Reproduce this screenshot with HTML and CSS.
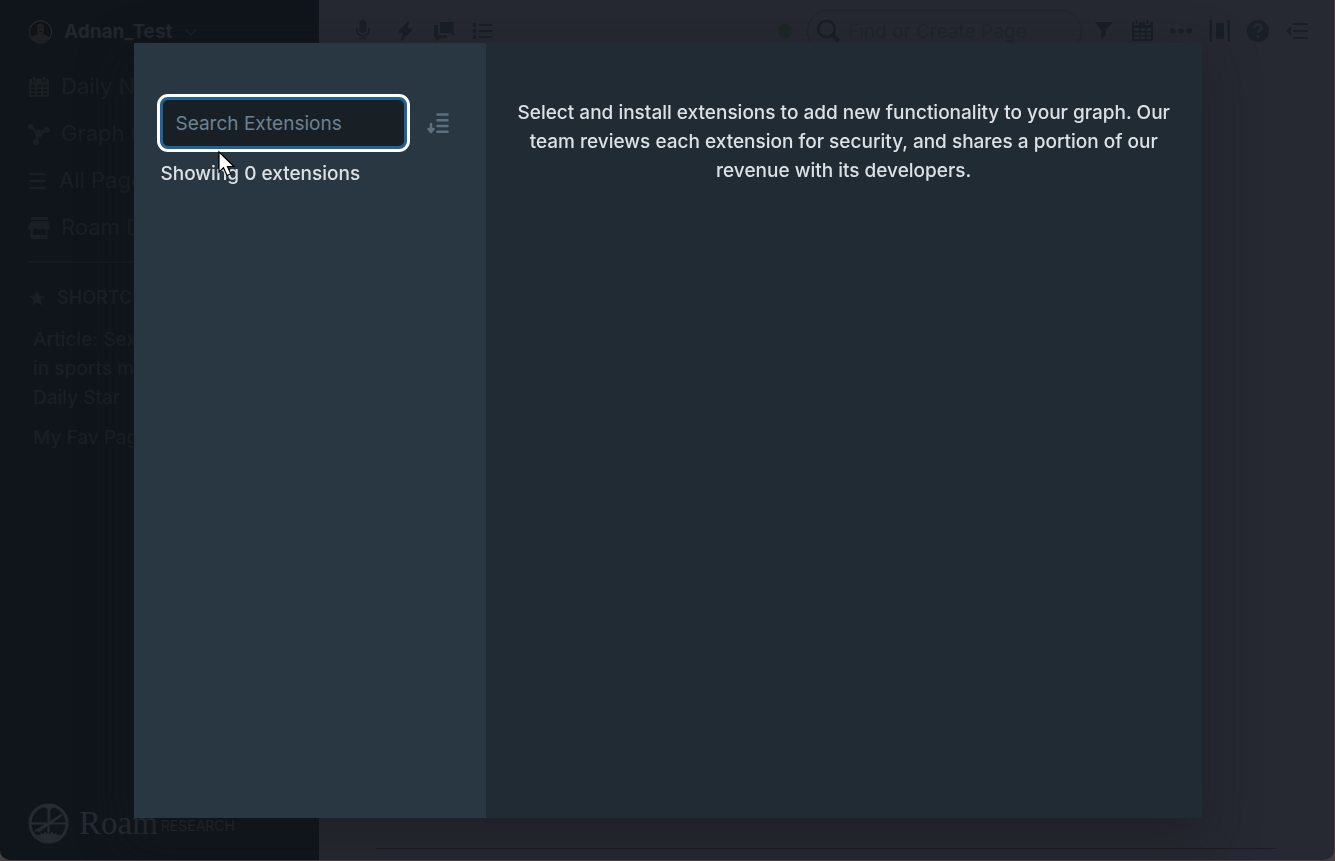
FILE: index.html
```html
<!DOCTYPE html>
<html lang="en">
<head>
<meta charset="utf-8">
<title>Roam Depot</title>
<link rel="stylesheet" href="styles.css">
</head>
<body>
<div class="app">
  <aside class="sidebar">
    <button class="account" type="button">
      <svg class="avatar" viewBox="0 0 26 26"><circle cx="13" cy="13" r="11.5" fill="#0f1318" stroke="#24282c" stroke-width="1.2"/><path d="M3 19c3-3 6-3 7.500-4.500C9 12 9 8.500 10 6c1-2.500 5-2.500 6 0s1 6-.5 8.500C17 16 20 16 23 19c-4 8-16 8-20 0z" fill="#1d2125"/><path d="M11 9h1.500M14 9h1.500M12 12.500h2.500" stroke="#101419"/></svg>
      <span>Adnan_Test</span>
      <svg class="chevron" viewBox="0 0 14 14"><path d="M1.500 4.500 7 9.500l5.500-5" fill="none" stroke="currentColor" stroke-width="1.500"/></svg>
    </button>
    <nav class="menu">
      <a href="#"><svg viewBox="0 0 22 22"><path fill="currentColor" fill-rule="evenodd" d="M2 3h2v3h4V3h6v3h4V3h2q1 0 1 1v16q0 1-1 1H2q-1 0-1-1V4q0-1 1-1zM3 9v2.500h4V9zm6 0v2.500h4V9zm6 0v2.500h4V9zM3 13v2.500h4V13zm6 0v2.500h4V13zm6 0v2.500h4V13zM3 17v2h4v-2zm6 0v2h4v-2zm6 0v2h4v-2zM5 1h2v4H5zM15 1h2v4h-2z"/></svg>Daily Notes</a>
      <a href="#"><svg viewBox="0 0 22 22"><g fill="currentColor"><circle cx="3" cy="4" r="3"/><circle cx="19" cy="7" r="3"/><circle cx="8" cy="19" r="3"/><path d="m5 6 4 1h5l3 0-2 4-3 4H9l-2-4z"/></g><path d="m3 4 8 6.500L19 7M8 19l3-8" fill="none" stroke="currentColor" stroke-width="2"/></svg>Graph Overview</a>
      <a class="pages" href="#"><svg viewBox="0 0 22 22"><path d="M1.500 4h16M1.500 11h16M1.500 18h16" stroke="currentColor" stroke-width="1.800"/></svg>All Pages</a>
      <a href="#"><svg viewBox="0 0 22 22"><path fill="currentColor" fill-rule="evenodd" d="M3 0h17v3H3zM3 4h17l2 6q0 3-2.500 3v9h-17v-9Q0 13 0 10zm2 9v5h13v-5q-2 0-3-2-1.500 2-3.500 2T8 11q-1 2-3 2z"/></svg>Roam Depot</a>
    </nav>
    <section class="shortcuts">
      <h2><svg viewBox="0 0 16 16"><path fill="currentColor" d="m8 0 2.200 5.500 5.800.4-4.500 3.700L13 15.500 8 12.300l-5 3.200 1.500-5.900L0 5.900l5.800-.4z"/></svg>SHORTCUTS</h2>
      <a href="#">Article: Sexism<br>in sports media<br>Daily Star</a>
      <a href="#">My Fav Page</a>
    </section>
    <div class="brand">
      <svg viewBox="0 0 42 42"><g fill="none" stroke="currentColor"><circle cx="21" cy="21" r="19" stroke-width="3"/><path d="M21 2v30M2 21h38M7 29 35 12" stroke-width="2"/></g><path fill="currentColor" d="M12 3h18l-6 3-1 2v10l3-1 8-6 1 2-8 6-1 2-5 2-1 5 2 4 3-3 1 3 4-2-1 3 5-1-4 4q-10 8-18 0l-4-4 5 1-1-3 4 2 1-3 3 3 2-4-1-5-10 7-2-2 8-5 5-4V8l-2-2z"/></svg>
      <span class="brand-name">Roam</span><span class="brand-sub">RESEARCH</span>
    </div>
  </aside>
  <main class="main">
    <header class="topbar">
      <div class="tools">
        <button type="button" aria-label="Record"><svg viewBox="0 0 20 20"><rect x="6.500" y="-1" width="7" height="13" rx="3.500" fill="currentColor"/><path d="M4 7v2q0 5.500 6 5.500T16 9V7M10 14v3M6.500 17.500h7" fill="none" stroke="currentColor" stroke-width="1.600"/></svg></button>
        <button type="button" aria-label="Quick capture"><svg viewBox="0 0 20 20"><path fill="currentColor" stroke="currentColor" stroke-width="1.500" stroke-linejoin="round" d="M15.500 1 6 11h5.500L8.500 19 19 8h-6z"/></svg></button>
        <button type="button" aria-label="Comments"><svg viewBox="0 0 20 20"><path fill="currentColor" d="M8 1h12q1 0 1 1v13l-4-3H7V2q0-1 1-1zM2 4h3v10h9v3H8l-5 3v-3q-2 0-2-2V5q0-1 1-1z"/></svg></button>
        <button type="button" aria-label="Outline"><svg viewBox="0 0 20 20"><g fill="currentColor"><circle cx="1.500" cy="4" r="2"/><circle cx="1.500" cy="10" r="2"/><circle cx="1.500" cy="16" r="2"/></g><path d="M6.500 4h12M6.500 10h12M6.500 16h12" stroke="currentColor" stroke-width="2.200" stroke-linecap="round"/></svg></button>
      </div>
      <div class="actions">
        <span class="status"></span>
        <label class="find"><svg viewBox="0 0 22 22"><circle cx="9.500" cy="9" r="8.300" fill="none" stroke="currentColor" stroke-width="2.600"/><path d="m16 15.500 4.500 4.500" stroke="currentColor" stroke-width="4" stroke-linecap="round"/></svg><input type="text" placeholder="Find or Create Page" aria-label="Find or Create Page"></label>
        <button type="button" aria-label="Filter"><svg viewBox="0 0 22 22"><path fill="currentColor" d="M4 2h18l-7 8v5l-5 4v-9z"/></svg></button>
        <button type="button" aria-label="Calendar"><svg viewBox="0 0 22 22"><path fill="currentColor" fill-rule="evenodd" d="M2 2h2v3h5V2h6v3h5V2h2q1 0 1 1v17q0 1-1 1H3q-1 0-1-1zM4.500 8v3H9V8zm6 0v3H15V8zm6 0v3H21V8zm-12 4.500V15H9v-2.500zm6 0V15H15v-2.500zm6 0V15H21v-2.500zm-12 4V19H9v-2.500zm6 0V19H15v-2.500zm6 0V19H21v-2.500zM5.500 0h2v4h-2zM16.500 0h2v4h-2z"/></svg></button>
        <button type="button" aria-label="More"><svg viewBox="0 0 22 22"><g fill="currentColor"><circle cx="3.700" cy="11" r="2.700"/><circle cx="12" cy="11" r="2.700"/><circle cx="20.300" cy="11" r="2.700"/></g></svg></button>
        <button type="button" aria-label="Page width"><svg viewBox="0 0 22 22"><path fill="currentColor" d="M1.500 0H4v22H1.500zM19.500 0H22v22h-2.500zM9 3h6q1 0 1 1v14q0 1-1 1H9q-1 0-1-1V4q0-1 1-1z"/></svg></button>
        <button type="button" aria-label="Help"><svg viewBox="0 0 22 22"><circle cx="11" cy="11" r="11" fill="currentColor"/><path d="M7.500 8q0-3.500 3.500-3.500T14.500 8q0 1.500-2 2.700Q11 11.600 11 13" fill="none" stroke="#272932" stroke-width="2.300"/><circle cx="11" cy="16.500" r="1.500" fill="#272932"/></svg></button>
        <button type="button" aria-label="Open right sidebar"><svg viewBox="0 0 22 22"><path d="M8 4h13M8 11h13M8 18h13" stroke="currentColor" stroke-width="2.200" stroke-linecap="round"/><path fill="currentColor" d="M0 11l5-4.500v9z"/></svg></button>
      </div>
    </header>
    <hr class="page-rule">
  </main>
</div>

<div class="overlay">
  <div class="dialog" role="dialog" aria-label="Roam Depot">
    <section class="list-pane">
      <div class="search-row">
        <input class="search" type="text" placeholder="Search Extensions" aria-label="Search Extensions">
        <button class="sort" type="button" aria-label="Sort"><svg viewBox="0 0 22 22"><path d="M10.500 2.500h10M10.500 8.200h10M10.500 14h10M10.500 19.700h10" stroke="currentColor" stroke-width="2.600" stroke-linecap="round"/><path d="M4 12v6M1.500 17l2.500 3 2.500-3z" fill="currentColor" stroke="currentColor" stroke-width="2.500" stroke-linejoin="round" stroke-linecap="round"/></svg></button>
      </div>
      <p class="count">Showing 0 extensions</p>
    </section>
    <section class="detail-pane">
      <p>Select and install extensions to add new functionality to your graph. Our team reviews each extension for security, and shares a portion of our revenue with its developers.</p>
    </section>
  </div>
</div>
<svg class="pointer" viewBox="0 0 18 26"><path d="M1 1v20l4.500-4.300L9 24.500l3.800-1.700L9.500 15.500H16z" fill="#fff" stroke="#000" stroke-width="1.200"/></svg>
</body>
</html>
```
FILE: styles.css
```css
* { box-sizing: border-box; }

body {
  margin: 0;
  background: #45403f;
  font: 500 19px/29px Inter, "Liberation Sans", sans-serif;
  color: #1a1f24;
  overflow: hidden;
}

button {
  padding: 0;
  border: 0;
  background: none;
  color: inherit;
  font: inherit;
}

a { color: inherit; text-decoration: none; }
svg { display: block; flex: none; overflow: visible; }

.app {
  display: flex;
  height: calc(100vh - 1px);
  margin-right: 1px;
  border-radius: 0 0 10px 10px;
  overflow: hidden;
  background: #272932;
}

.sidebar {
  display: flex;
  flex-direction: column;
  flex: none;
  width: 319px;
  padding: 17px 28px 16px;
  background: #10151c;
}

.account {
  display: flex;
  align-items: center;
  gap: 11px;
  font-weight: 700;
  color: #22272b;
}

.avatar { width: 25px; height: 26px; }
.chevron { width: 14px; height: 14px; color: #1b2025; }

.menu {
  display: flex;
  flex-direction: column;
  margin-top: 17px;
  padding-bottom: 10px;
  border-bottom: 2px solid #151a20;
  font-size: 22px;
  font-weight: 400;
}

.menu a {
  display: flex;
  align-items: center;
  gap: 11px;
  height: 47px;
  white-space: nowrap;
}

.menu .pages { gap: 9px; }
.menu svg { width: 22px; height: 22px; }

.shortcuts {
  display: flex;
  flex-direction: column;
  gap: 11px;
  margin-top: 20px;
}

.shortcuts h2 {
  display: flex;
  align-items: center;
  gap: 12px;
  margin: 0 0 2px;
  font-size: 18px;
  line-height: 29px;
  font-weight: 600;
}

.shortcuts h2 svg { width: 16px; height: 16px; margin-left: 1px; }
.shortcuts a { padding-left: 5px; }

.brand {
  display: flex;
  align-items: center;
  margin-top: auto;
  color: #262b31;
}

.brand svg { width: 41px; height: 41px; margin-right: 10px; }
.brand-name { font: 33px/41px "Liberation Serif", serif; }
.brand-sub { padding: 4px 0 0 3px; font-size: 14px; font-weight: 400; color: #23292d; }

.main {
  display: flex;
  flex-direction: column;
  justify-content: space-between;
  flex: 1;
  min-width: 0;
}

.topbar {
  display: flex;
  align-items: center;
  justify-content: space-between;
  padding: 10px 26px 0 34px;
  color: #191f26;
}

.tools, .actions { display: flex; align-items: center; }
.tools { gap: 20px; }
.tools svg { width: 20px; height: 20px; }
.actions { gap: 17px; }
.actions svg { width: 22px; height: 22px; }

.status {
  width: 14px;
  height: 14px;
  margin-right: -2px;
  border-radius: 50%;
  background: #1d2628;
}

.find {
  display: flex;
  align-items: center;
  gap: 9px;
  width: 275px;
  height: 42px;
  margin-right: -8px;
  padding: 0 9px;
  border: 1px solid #20242a;
  border-radius: 21px;
}

.find input {
  flex: 1;
  min-width: 0;
  padding: 0;
  border: 0;
  background: none;
  font: inherit;
  font-weight: 400;
}

.find input::placeholder { color: #1f252c; opacity: 1; }

.page-rule {
  width: calc(100% - 115px);
  height: 1px;
  margin: 0 58px 11px 57px;
  border: 0;
  background: #191c21;
}

.overlay {
  position: fixed;
  inset: 0;
  display: flex;
  align-items: center;
  justify-content: center;
}

.dialog {
  display: flex;
  width: 80%;
  height: 90%;
  background: #212b33;
  color: #dce1e5;
  box-shadow: 0 18px 46px 6px rgba(17, 24, 24, 0.4);
}

.list-pane {
  width: 33%;
  padding: 54px 27px 0 26px;
  background: #293742;
}

.search-row {
  display: flex;
  align-items: center;
  gap: 20px;
  padding-right: 10px;
}

.search {
  flex: 1;
  min-width: 0;
  height: 52px;
  padding: 0 13px;
  border: 3px solid #1d6299;
  border-radius: 8px;
  outline: 3px solid #fff;
  background: #182026;
  color: #e0e5ea;
  font: inherit;
  font-weight: 400;
}

.search::placeholder { color: #6b8294; opacity: 1; }
.sort { color: #5c7080; }
.sort svg { width: 22px; height: 22px; }
.count { margin: 10px 0 0 1px; }

.detail-pane {
  flex: 1;
  padding: 55px 24px 0;
  text-align: center;
}

.detail-pane p { margin: 0; }

.pointer {
  position: absolute;
  left: 218px;
  top: 151px;
  width: 18px;
  height: 26px;
}
```
